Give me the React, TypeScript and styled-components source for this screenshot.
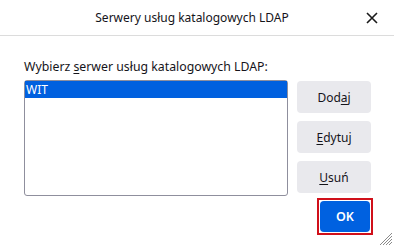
import styled, { createGlobalStyle } from "styled-components";

const GlobalStyle = createGlobalStyle`
  html, body {
    margin: 0;
    padding: 0;
    background: #ffffff;
  }
  body {
    font-family: "Noto Sans", "Open Sans", sans-serif;
    font-size: 12px;
    color: #15141a;
  }
`;

const Dialog = styled.div`
  width: 394px;
  height: 247px;
  display: flex;
  flex-direction: column;
  background: #ffffff;
  position: relative;
  overflow: hidden;
`;

const TitleBar = styled.div`
  height: 35px;
  display: grid;
  grid-template-columns: 1fr auto;
  align-items: center;
  border-bottom: 1px solid #dcdcdc;
  padding: 0 12px 0 0;
`;

const Title = styled.div`
  text-align: center;
  font-size: 12px;
  padding-left: 22px;
`;

const CloseButton = styled.button`
  width: 20px;
  height: 20px;
  display: flex;
  align-items: center;
  justify-content: center;
  border: none;
  background: none;
  padding: 0;
  color: #1a1a1a;
`;

const Body = styled.div`
  display: grid;
  grid-template-columns: 264px 74px;
  column-gap: 9px;
  padding: 22px 24px 0 24px;
`;

const ListColumn = styled.div`
  display: flex;
  flex-direction: column;
  gap: 4px;
`;

const Label = styled.label`
  height: 18px;
  line-height: 18px;
  font-size: 12.3px;
`;

const ListBox = styled.div`
  height: 114px;
  border: 1px solid #8f8f9d;
  border-radius: 3px;
  background: #fff;
`;

const ListItem = styled.div<{ $selected?: boolean }>`
  height: 17px;
  line-height: 17px;
  font-size: 12px;
  padding-left: 1px;
  background: ${(p) => (p.$selected ? "#0060df" : "transparent")};
  color: ${(p) => (p.$selected ? "#ffffff" : "#15141a")};
`;

const ButtonColumn = styled.div`
  display: flex;
  flex-direction: column;
  gap: 8px;
  padding-top: 23px;
`;

const Button = styled.button<{ $primary?: boolean }>`
  height: 32px;
  border: none;
  border-radius: 4px;
  font-family: "Noto Sans", "Open Sans", sans-serif;
  font-size: 12px;
  background: ${(p) => (p.$primary ? "#0061e0" : "#e9e9ed")};
  color: ${(p) => (p.$primary ? "#ffffff" : "#15141a")};
  font-weight: ${(p) => (p.$primary ? 600 : 400)};
  padding: 0;
`;

const Footer = styled.div`
  display: flex;
  justify-content: flex-end;
  padding: 2px 21px 0 0;
`;

const Highlight = styled.div`
  border: 2px solid #d0101a;
  padding: 1px;
  display: flex;
`;

const OkButton = styled(Button)`
  width: 50px;
  height: 31px;
  font-size: 12.5px;
`;

const Grip = styled.svg`
  position: absolute;
  right: 2px;
  bottom: 2px;
`;

const U = styled.span`
  text-decoration: underline;
  text-underline-offset: 2px;
`;

export default function App() {
  return (
    <>
      <GlobalStyle />
      <Dialog>
        <TitleBar>
          <Title>Serwery usług katalogowych LDAP</Title>
          <CloseButton aria-label="Zamknij">
            <svg width="12" height="12" viewBox="0 0 12 12">
              <path d="M1 1 L11 11 M11 1 L1 11" stroke="#1a1a1a" strokeWidth="1.6" fill="none" />
            </svg>
          </CloseButton>
        </TitleBar>
        <Body>
          <ListColumn>
            <Label>
              Wybierz <U>s</U>erwer usług katalogowych LDAP:
            </Label>
            <ListBox>
              <ListItem $selected>WIT</ListItem>
            </ListBox>
          </ListColumn>
          <ButtonColumn>
            <Button>
              Dod<U>a</U>j
            </Button>
            <Button>
              <U>E</U>dytuj
            </Button>
            <Button>
              <U>U</U>suń
            </Button>
          </ButtonColumn>
        </Body>
        <Footer>
          <Highlight>
            <OkButton $primary>OK</OkButton>
          </Highlight>
        </Footer>
        <Grip width="12" height="12" viewBox="0 0 12 12">
          <path d="M12 0 L0 12 M12 3 L3 12 M12 6 L6 12 M12 9 L9 12" stroke="#8a8a8a" strokeWidth="1" fill="none" />
        </Grip>
      </Dialog>
    </>
  );
}
